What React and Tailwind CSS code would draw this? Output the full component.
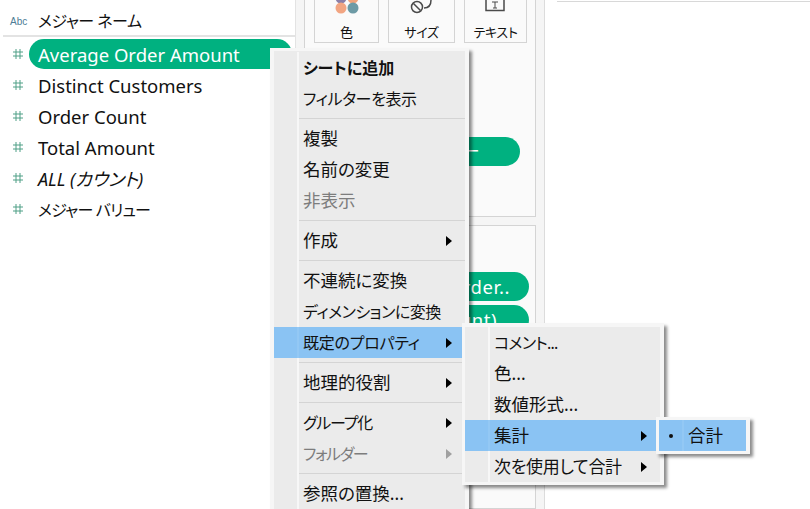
import React from 'react';

const fontStack = "font-['Noto_Sans','Noto_Sans_CJK_JP',sans-serif] [font-feature-settings:'palt']";

const measures = [
  { label: 'Average Order Amount', active: true, text: 'text-[18.5px]' },
  { label: 'Distinct Customers', text: 'text-[18.5px]' },
  { label: 'Order Count', text: 'text-[18.5px]' },
  { label: 'Total Amount', text: 'text-[18.5px]' },
  { label: 'ALL (カウント)', italic: true, text: 'text-[18px]' },
  { label: 'メジャー バリュー', text: 'text-[16px] tracking-[-0.8px]' },
];

// katakana runs narrower than kanji in the picture, so those rows get their own size
const mainMenu = [
  { label: 'シートに追加', bold: true, text: 'text-[16px]' },
  { label: 'フィルターを表示', text: 'text-[16px] tracking-[-0.4px]' },
  { sep: true },
  { label: '複製' },
  { label: '名前の変更' },
  { label: '非表示', disabled: true },
  { sep: true },
  { label: '作成', arrow: true },
  { sep: true },
  { label: '不連続に変換' },
  { label: 'ディメンションに変換', text: 'text-[16px] tracking-[-0.5px]' },
  { label: '既定のプロパティ', arrow: true, active: true, text: 'text-[16px] tracking-[-0.25px]' },
  { sep: true },
  { label: '地理的役割', arrow: true },
  { sep: true },
  { label: 'グループ化', arrow: true, text: 'text-[16px] tracking-[-1.2px]' },
  { label: 'フォルダー', arrow: true, disabled: true, text: 'text-[16px] tracking-[-1.4px]' },
  { sep: true },
  { label: '参照の置換...' },
];

const propertyMenu = [
  { label: 'コメント...', text: 'text-[16px] tracking-[-0.7px]' },
  { label: '色...' },
  { label: '数値形式...' },
  { label: '集計', arrow: true, active: true },
  { label: '次を使用して合計', arrow: true, text: 'text-[17px] tracking-[-0.3px]' },
];

function HashIcon() {
  return (
    <svg width="10" height="10" viewBox="0 0 10 10" className="shrink-0 text-[#4f9f86]" stroke="currentColor" strokeWidth="1">
      <path d="M3 0v10M7 0v10M0 3h10M0 7h10" fill="none" />
    </svg>
  );
}

function MenuRow({ item }) {
  if (item.sep) {
    return (
      <div className="h-[9px] flex items-center">
        <div className="w-[23px] h-full shrink-0" />
        <div className="w-[2px] h-full shrink-0 bg-[#f7f7f7]" />
        <div className="h-[1px] grow bg-[#d4d4d4]" />
      </div>
    );
  }
  return (
    <div className={`h-[31px] flex items-center ${item.active ? 'bg-[#8ac3f3]' : ''}`}>
      <div className="w-[23px] h-full shrink-0" />
      <div className={`w-[2px] h-full shrink-0 ${item.active ? 'bg-[#93c8f4]' : 'bg-[#f7f7f7]'}`} />
      <span className={`pl-[4px] grow whitespace-nowrap ${item.text || 'text-[17.5px]'} ${item.bold ? 'font-bold' : ''} ${item.disabled ? 'text-[#7d7d7d]' : 'text-[#111]'}`}>
        {item.label}
      </span>
      {item.arrow && (
        <svg width="6" height="10" viewBox="0 0 6 10" className={`mr-[13px] shrink-0 ${item.disabled ? 'text-[#a0a0a0]' : 'text-black'}`}>
          <path d="M0 0l6 5-6 5z" fill="currentColor" />
        </svg>
      )}
    </div>
  );
}

function App() {
  return (
    <div className={`relative w-[810px] h-[509px] overflow-hidden flex bg-white ${fontStack}`}>
      {/* data pane */}
      <div className="w-[296px] h-full shrink-0 border-r border-[#e3e3e3] bg-white">
        <div className="ml-[3px] h-[37px] flex items-center border-b-2 border-[#e3e3e3] pl-[7px] pt-[7px]">
          <span className="w-[28px] text-[10px] text-[#4e7d96] font-['Liberation_Sans',sans-serif]">Abc</span>
          <span className="text-[16px] tracking-[-0.5px] text-[#111]">メジャー ネーム</span>
        </div>
        <div className="pt-[1px]">
          {measures.map((m) => (
            <div key={m.label} className="h-[31px] flex items-center pl-[13px]">
              <HashIcon />
              <div className={`ml-[6px] w-[263px] h-[30px] rounded-full pl-[9px] pt-[3px] flex items-center whitespace-nowrap ${m.text} ${m.active ? 'bg-[#00b180] text-white' : 'text-[#111]'} ${m.italic ? 'italic' : ''}`}>
                {m.label}
              </div>
            </div>
          ))}
        </div>
      </div>

      {/* shelves */}
      <div className="w-[249px] h-full shrink-0 bg-[#f5f5f5] border-r border-[#dcdcdc] px-[8px] flex flex-col gap-[8px]">
        <div className="h-[217px] shrink-0 bg-[#fafafa] border-x border-b border-[#d4d4d4] pl-[9px] flex flex-col">
          <div className="flex gap-[9px] shrink-0">
            <div className="relative w-[65px] h-[43px] border-x border-b border-[#d4d4d4] flex items-end justify-center text-[13px] text-[#111] overflow-hidden">
              <svg width="30" height="20" viewBox="0 0 30 20" className="absolute left-[19px] top-0">
                <circle cx="7" cy="-2" r="5.5" fill="#8b7fa8" />
                <circle cx="19" cy="-2" r="5.5" fill="#f0a37c" />
                <circle cx="7" cy="8" r="5.5" fill="#f2a582" />
                <circle cx="19" cy="8" r="5.5" fill="#6d9aa5" />
              </svg>
              色
            </div>
            <div className="relative w-[67px] h-[43px] border-x border-b border-[#d4d4d4] flex items-end justify-center text-[13px] tracking-[-0.4px] text-[#111] overflow-hidden">
              <svg width="34" height="20" viewBox="0 0 34 20" className="absolute left-[18px] top-0" fill="none" stroke="#4a4a4a" strokeWidth="1.5">
                <circle cx="10" cy="7" r="5.5" />
                <path d="M6.5 3.5l7 7" />
                <path d="M17 8c5 0 7-3 7-8" />
              </svg>
              サイズ
            </div>
            <div className="relative w-[63px] h-[43px] border-x border-b border-[#d4d4d4] flex items-end justify-center text-[13px] tracking-[-0.3px] text-[#111] overflow-hidden">
              <svg width="22" height="14" viewBox="0 0 22 14" className="absolute left-[20px] top-0" fill="none" stroke="#4a4a4a" strokeWidth="1.5">
                <path d="M1 -2v12.5h18V-2" />
                <path d="M7 2h6M10 2v6M8 8h4" strokeWidth="1" />
              </svg>
              テキスト
            </div>
          </div>
          <div className="mt-[94px] w-[206px] h-[29px] rounded-full bg-[#00b180] text-white text-[18px] pl-[148px] flex items-center whitespace-nowrap overflow-hidden">
            ー
          </div>
        </div>
        <div className="grow bg-[#fafafa] border border-[#d4d4d4] pl-[16px] pt-[46px] flex flex-col gap-[4px]">
          <div className="w-[208px] h-[29px] rounded-full bg-[#00b180] text-white text-[18.5px] tracking-[0.6px] pr-[19px] pt-[1px] flex items-center justify-end whitespace-nowrap">Order..</div>
          <div className="w-[208px] h-[30px] rounded-full bg-[#00b180] text-white text-[18.5px] tracking-[0.5px] pr-[32px] flex items-center justify-end whitespace-nowrap">Amount)</div>
        </div>
      </div>

      {/* canvas */}
      <div className="grow pl-[12px] pt-[1px]">
        <div className="h-[1px] bg-[#d8d8d8]" />
      </div>

      {/* context menu */}
      <div className="absolute left-[270px] top-[48px] w-[199px] bg-[#ebebeb] border-y-[3px] border-x-[4px] border-[#f6f6f6] shadow-[3px_3px_3px_rgba(0,0,0,0.45)] py-[1px]">
        {mainMenu.map((item, i) => <MenuRow key={i} item={item} />)}
      </div>

      {/* default properties submenu */}
      <div className="absolute left-[462px] top-[323px] w-[202px] bg-[#ebebeb] border-t-[4px] border-b-[3px] border-l-[3px] border-r-[4px] border-[#f6f6f6] shadow-[3px_3px_3px_rgba(0,0,0,0.45)]">
        {propertyMenu.map((item, i) => <MenuRow key={i} item={item} />)}
      </div>

      {/* aggregation submenu */}
      <div className="absolute left-[656px] top-[417px] w-[94px] border-y-[3px] border-l-[3px] border-r-[4px] border-[#f6f6f6] bg-[#8ac3f3] shadow-[3px_3px_3px_rgba(0,0,0,0.45)]">
        <div className="h-[31px] flex items-center">
          <div className="w-[23px] h-full shrink-0 flex items-center justify-center">
            <div className="w-[4px] h-[4px] rounded-full bg-[#111]" />
          </div>
          <div className="w-[2px] h-full shrink-0 bg-[#93c8f4]" />
          <span className="pl-[4px] text-[17.5px] text-[#111] whitespace-nowrap">合計</span>
        </div>
      </div>
    </div>
  );
}

export default App;
